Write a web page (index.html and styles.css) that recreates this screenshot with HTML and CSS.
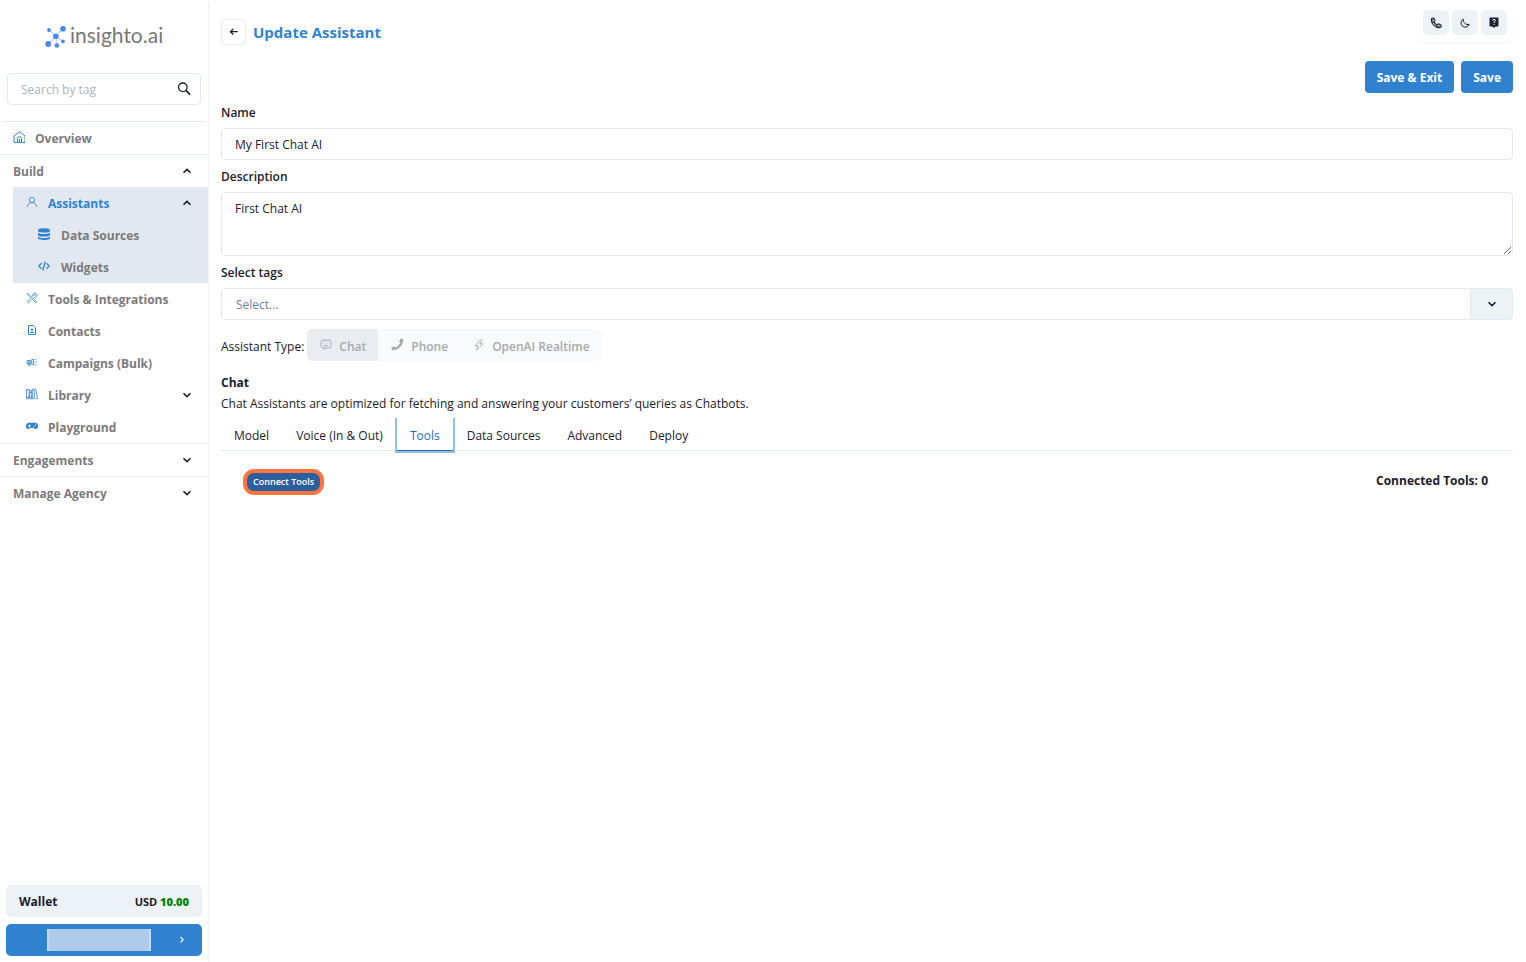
FILE: index.html
```html
<!DOCTYPE html>
<html lang="en">
<head>
<meta charset="utf-8">
<meta name="viewport" content="width=device-width, initial-scale=1">
<title>Update Assistant</title>
<link rel="stylesheet" href="styles.css">
</head>
<body>
<svg class="defs" aria-hidden="true">
  <symbol id="down" viewBox="0 0 12 12"><path d="M2.500 4.200 6 7.600l3.500-3.400" fill="none" stroke="currentColor" stroke-width="1.600"/></symbol>
  <symbol id="up" viewBox="0 0 12 12"><path d="M2.500 7.800 6 4.400l3.500 3.400" fill="none" stroke="currentColor" stroke-width="1.600"/></symbol>
</svg>
<div class="app">
  <aside class="sidebar">
    <a class="logo" href="#">
      <svg width="22" height="24" viewBox="0 0 22 24" aria-hidden="true">
        <g stroke="#b9d2ff" stroke-width="1.200"><path d="M12 11 19 3.500M12 11 5 5M12 11 4.500 19M12 11 19 16.500M12 11 13 20.500"/></g>
        <g fill="#4a86fb"><circle cx="11.800" cy="11.200" r="2.800"/><circle cx="19" cy="3.800" r="2.800"/><circle cx="5" cy="5" r="1.900"/><circle cx="4.200" cy="19" r="2.900"/><circle cx="19" cy="16.300" r="1.900"/><circle cx="12.800" cy="20.500" r="2.300"/></g>
      </svg>
      <span>insighto.ai</span>
    </a>
    <form class="search" role="search">
      <input type="search" placeholder="Search by tag" aria-label="Search by tag">
      <button type="button" aria-label="Search"><svg width="14" height="14" viewBox="0 0 14 14"><circle cx="5.800" cy="5.300" r="4.300" fill="none" stroke="currentColor" stroke-width="1.300"/><path d="m8.900 8.400 4.200 4.200" stroke="currentColor" stroke-width="1.600"/></svg></button>
    </form>
    <nav class="nav">
      <a class="row overview" href="#"><svg class="icon" viewBox="0 0 12 12"><path d="M1 5 6.500.8 12 5v6.400H1zM4.500 11V7.500q0-1.800 2-1.800t2 1.800V11M6.500 8v3" fill="none" stroke="currentColor"/></svg>Overview</a>
      <button class="row section" type="button"><span>Build</span><svg class="chev"><use href="#up"/></svg></button>
      <div class="group">
        <button class="row item active" type="button"><svg class="icon" viewBox="0 0 12 12"><circle cx="6" cy="4" r="2.600" fill="none" stroke="currentColor" stroke-width=".8"/><path d="M1.500 11q0-4.500 4.500-4.500t4.500 4.500" fill="none" stroke="currentColor" stroke-width=".8"/></svg><span>Assistants</span><svg class="chev"><use href="#up"/></svg></button>
        <a class="row sub" href="#"><svg class="icon" viewBox="0 0 12 12"><path d="M0 2C0-.4 12-.4 12 2v1c0 2.200-12 2.200-12 0zM0 4.800c2 1.700 10 1.700 12 0v2.100c0 2.200-12 2.200-12 0zM0 8.700c2 1.700 10 1.700 12 0v1.500c0 2.300-12 2.300-12 0z" fill="currentColor"/></svg>Data Sources</a>
        <a class="row sub" href="#"><svg class="icon" viewBox="0 0 12 12"><path d="M3.500 3.200.8 6l2.700 2.800M8.500 3.200 11.200 6 8.500 8.800M7.200 1.500 4.800 10.500" fill="none" stroke="currentColor" stroke-width="1.300"/></svg>Widgets</a>
      </div>
      <a class="row item" href="#"><svg class="icon" viewBox="0 0 12 12"><path d="m1.500 1 3.600 3.600L4.300 5.400.9 2zM7.400 6.600l3.400 3.200-1 1-3.300-3.300zM8.300.9 6.500 3v1.300L1 9.600l1.300 1.500 5.300-5.500h1.600l2-2-.4-1.200L9.300 4 8 2.900 9.700 1.100z" fill="none" stroke="currentColor" stroke-width=".7"/></svg>Tools &amp; Integrations</a>
      <a class="row item" href="#"><svg class="icon" viewBox="0 0 12 12"><path d="M2.500 1.500h4.800l2.200 2.200v6.800h-7z" fill="none" stroke="currentColor"/><circle cx="6" cy="5.600" r="1.100" fill="currentColor"/><path d="M4 9V8.400q2-1.800 4 0V9z" fill="currentColor"/></svg>Contacts</a>
      <a class="row item" href="#"><svg class="icon" viewBox="0 0 12 12"><path d="M1 4.500h3.200L7.500 3v6L4.200 7.500H1zM2.500 7.500v2h1.700v-2M5 4.300v3.400M9 3.800l1.500-1M9.300 6H11M9 8.200l1.500 1" fill="none" stroke="currentColor" stroke-width=".8"/><path d="M1.500 5h5v2h-5z" fill="currentColor" opacity=".5"/></svg>Campaigns (Bulk)</a>
      <button class="row item" type="button"><svg class="icon" viewBox="0 0 12 12"><path d="M.5 1.500h2.600v9.300H.5zM3.700 2.500h2v8.300h-2zM3.700 4.500h2M3.700 8.800h2M6.300 1.200h2v9.600h-2zM8.700 1.900l1.200-.3 1.700 9-2 .3M.5 9h2.600" fill="none" stroke="currentColor" stroke-width=".8"/></svg><span>Library</span><svg class="chev"><use href="#down"/></svg></button>
      <a class="row item" href="#"><svg class="icon" viewBox="0 0 12 12"><path fill-rule="evenodd" d="M3 2.800h6c2 0 3 1.400 3 3.200S11 9.200 9.500 9c-1 0-1.400-1-2-1h-3c-.6 0-1 1-2 1C1 9.200 0 7.800 0 6s1-3.200 3-3.200zm0 1.700v1H2v1h1v1h1v-1h1v-1H4v-1zm4.500 1.500v1h1V6zM9 4.500v1h1v-1z" fill="currentColor"/></svg>Playground</a>
      <button class="row section lined" type="button"><span>Engagements</span><svg class="chev"><use href="#down"/></svg></button>
      <button class="row section lined" type="button"><span>Manage Agency</span><svg class="chev"><use href="#down"/></svg></button>
    </nav>
    <div class="account">
      <div class="wallet"><span>Wallet</span><span class="amount">USD <b>10.00</b></span></div>
      <button class="profile" type="button" aria-label="Account"><span class="mask"></span><svg width="8" height="8" viewBox="0 0 8 8"><path d="m2.500 1 2.700 2.700-2.700 2.700" fill="none" stroke="currentColor" stroke-width="1.100"/></svg></button>
    </div>
  </aside>

  <main class="main">
    <header class="top">
      <button class="back" type="button" aria-label="Back"><svg width="10" height="10" viewBox="0 0 10 10"><path d="M8.800 4.700H1.500M4.300 1.900 1.500 4.700l2.800 2.800" fill="none" stroke="currentColor" stroke-width="1.300"/></svg></button>
      <h1>Update Assistant</h1>
      <div class="quick">
        <button type="button" aria-label="Call"><svg width="12" height="12" viewBox="0 0 12 12"><path d="M1.400 2.400C1.700.7 3.600.5 4.300 1.900L5 3.300Q5 4.300 4 4.900q1 2 3 3l.9-.8q.6-.4 1.300 0l1.300.7c1.300.8.7 2.700-1 2.900C5.800 11 .8 6.200 1.400 2.400zM1.600 3.300l2-.9M4 4.900 2.200 5.400M7 7.900l-.3 2M8.700 10.500l.5-2.400" fill="none" stroke="currentColor" stroke-width="1.100"/></svg></button>
        <button type="button" aria-label="Dark mode"><svg width="10" height="10" viewBox="0 0 10 10"><path d="M3.400 1.200A4.200 4.200 0 1 0 9.200 6.300 4.500 4.500 0 0 1 3.400 1.200z" fill="none" stroke="currentColor"/></svg></button>
        <button type="button" aria-label="Help"><svg width="10" height="11" viewBox="0 0 10 11"><path d="M1 .5h8l.5.5v8L9 9.500H6.500L5 11 3.500 9.500H1L.5 9V1z" fill="currentColor"/><path d="M3.600 3.800Q3.600 2.300 5 2.300t1.400 1.400Q6.400 4.500 5 5.300v.9M5 7v1" fill="none" stroke="#fff"/></svg></button>
      </div>
    </header>
    <form class="form">
      <div class="actions"><button type="button">Save &amp; Exit</button><button type="button">Save</button></div>
      <label for="name">Name</label>
      <input class="field" id="name" type="text" value="My First Chat AI">
      <label for="desc">Description</label>
      <textarea class="field" id="desc">First Chat AI</textarea>
      <label for="tags">Select tags</label>
      <div class="picker"><select id="tags"><option>Select...</option></select><span class="arrow"><svg class="chev"><use href="#down"/></svg></span></div>
      <div class="type">
        <span>Assistant Type:</span>
        <div class="segments">
          <button class="on" type="button" disabled><svg width="12" height="12" viewBox="0 0 12 12"><path d="M2.500 1.200h7q1.500 0 1.500 1.500v4.500q0 1.500-1.500 1.500H6L4 10.500V8.700H2.500Q1 8.700 1 7.200V2.700q0-1.500 1.500-1.500zM4 3.500v1M8 3.500v1M3.700 6.300q2.300 1.200 4.600 0" fill="none" stroke="currentColor"/></svg>Chat</button>
          <button type="button" disabled><svg width="13" height="13" viewBox="0 0 14 14"><path d="M10.500.5 13 1.200C14 8 7.500 13.800 1 13L.4 10.400l3-1.500 1.500 1.400Q8.500 8.600 10 5.200L8.600 3.600z" fill="currentColor"/></svg>Phone</button>
          <button type="button" disabled><svg width="12" height="12" viewBox="0 0 12 12"><path d="M7.500.8 2 6.500h3L3.500 11.200 10 4.800H6.500l2.500-3.700z" fill="none" stroke="currentColor" stroke-width=".9"/></svg>OpenAI Realtime</button>
        </div>
      </div>
      <h2>Chat</h2>
      <p>Chat Assistants are optimized for fetching and answering your customers’ queries as Chatbots.</p>
    </form>
    <div class="tabs" role="tablist">
      <button role="tab" type="button">Model</button>
      <button role="tab" type="button">Voice (In &amp; Out)</button>
      <button role="tab" type="button" class="selected" aria-selected="true">Tools</button>
      <button role="tab" type="button">Data Sources</button>
      <button role="tab" type="button">Advanced</button>
      <button role="tab" type="button">Deploy</button>
    </div>
    <section class="panel" role="tabpanel">
      <button class="connect" type="button">Connect Tools</button>
      <strong>Connected Tools: 0</strong>
    </section>
  </main>
</div>
</body>
</html>
```
FILE: styles.css
```css
* { box-sizing: border-box; }
body { margin: 0; font: 12px/20px "Open Sans", "Noto Sans", sans-serif; color: #1a202c; background: #fff; }
button, input, textarea, select { font: inherit; color: inherit; margin: 0; }
button { border: 0; padding: 0; background: none; cursor: pointer; }
a { color: inherit; text-decoration: none; }
h1, h2, p { margin: 0; }
svg { flex: none; }
.defs { display: none; }
.app { display: flex; min-height: 100vh; }

.sidebar { width: 208px; flex: none; display: flex; flex-direction: column; box-shadow: 0 1px 3px rgba(0, 0, 0, .14); }
.logo { display: flex; align-items: center; gap: 4px; height: 73px; padding-left: 44px; color: #777; font: 21px/24px Lato, sans-serif; }
.logo span { padding-bottom: 4px; }
.search { display: flex; height: 32px; margin: 0 7px 16px; border: 1px solid #e2e8f0; border-radius: 4px; }
.search input { flex: 1; min-width: 0; border: 0; padding: 2px 0 0 13px; background: none; outline: 0; appearance: none; }
.search input::placeholder { color: #a9b4c4; opacity: 1; }
.search button { width: 32px; display: grid; place-items: center; }
.nav { display: flex; flex-direction: column; color: #7b7b7b; font-weight: 700; }
.nav::before { content: ""; height: 1px; margin: 0 3px; background: #e2e8f0; }
.row { display: flex; align-items: center; width: 100%; height: 32px; padding: 2px 15px 0 13px; text-align: left; font-weight: 700; }
.row span { flex: 1; }
.icon { width: 12px; height: 12px; margin: 0 10px 4px 0; color: #3182ce; }
.chev { width: 12px; height: 12px; color: #1a202c; }
.row .chev { margin-bottom: 2px; }
.overview { height: 33px; border-bottom: 1px solid #e2e8f0; }
.item { padding-left: 26px; }
.group { margin-left: 13px; background: #e2e8f0; }
.group .item { padding-left: 13px; }
.active { color: #3182ce; }
.sub { padding-left: 25px; }
.sub .icon { margin-right: 11px; }
.lined { height: 33px; border-top: 1px solid #e2e8f0; }
.account { margin-top: auto; padding: 6px; display: grid; gap: 7px; }
.wallet { display: flex; align-items: center; justify-content: space-between; height: 32px; padding: 2px 13px 0; border-radius: 5px; background: #edf2f7; font-weight: 700; }
.amount { font-size: 11px; }
.amount b { color: green; }
.profile { display: flex; align-items: center; justify-content: space-between; height: 32px; padding: 0 16px 0 41px; border-radius: 5px; background: #3182ce; color: #fff; }
.mask { width: 104px; height: 22px; background: #aecce9; border: solid #c3daf0; border-width: 0 2px; }

.main { flex: 1; min-width: 0; padding: 10px 13px; }
.top { display: flex; align-items: flex-start; height: 45px; }
.back { display: grid; place-items: center; width: 25px; height: 26px; margin-top: 9px; border: 1px solid #e2e8f0; border-radius: 5px; }
h1 { margin: 10px 0 0 7px; color: #3182ce; font-size: 15px; line-height: 24px; font-weight: 700; }
.quick { display: flex; gap: 3px; margin-left: auto; padding: 0 6px 7px; border-radius: 6px; box-shadow: 0 1px 2px rgba(0, 0, 0, .06); }
.quick button { display: grid; place-items: center; width: 26px; height: 25px; border-radius: 5px; background: #edf2f7; }
.form { display: flex; flex-direction: column; padding-top: 6px; }
.actions { display: flex; justify-content: flex-end; gap: 7px; margin-bottom: 10px; }
.actions button { height: 32px; padding: 2px 12px 0; border-radius: 4px; background: #3182ce; color: #fff; font-weight: 700; }
label { font-weight: 600; margin-bottom: 5px; }
.field { display: block; width: 100%; height: 32px; margin-bottom: 7px; padding: 6px 13px 5px; border: 1px solid #e2e8f0; border-radius: 4px; background: #fff; }
textarea.field { height: 64px; resize: vertical; }
.picker { display: flex; height: 32px; border: 1px solid #e2e8f0; border-radius: 4px; overflow: hidden; }
.picker select { flex: 1; min-width: 0; appearance: none; border: 0; padding: 2px 14px 0; background: #fff; color: #718096; }
.arrow { display: grid; place-items: center; width: 42px; border-left: 1px solid #e2e8f0; background: #edf2f7; }
.type { display: flex; align-items: center; gap: 3px; margin: 9px 0 12px; }
.type > span { padding-top: 4px; }
.segments { display: flex; border-radius: 5px; overflow: hidden; background: #f9fafc; color: #a7a9ad; }
.segments button { display: flex; align-items: center; gap: 7px; height: 32px; padding: 4px 12px 0 13px; font-weight: 600; cursor: default; }
.segments svg { margin-bottom: 5px; }
.segments .on { background: #e9edf2; }
h2 { font-size: 12px; line-height: 20px; font-weight: 700; }
p { margin: 1px 0 4px; }
.tabs { display: flex; gap: 1px; border-bottom: 1px solid #e2e8f0; }
.tabs button { height: 33px; padding: 4px 13px 0; border-bottom: 1px solid transparent; margin-bottom: -1px; }
.tabs .selected { color: #2b6cb0; border-bottom-color: #2b6cb0; box-shadow: 0 0 0 2px #90c0ea; clip-path: inset(0 -3px -3px); }
.panel { display: flex; align-items: flex-start; justify-content: space-between; padding: 18px 25px 18px 22px; }
.connect { height: 26px; padding: 0 6px; border: 4px solid #ff7440; border-radius: 11px; background: #2c5f9e; color: #fff; font-size: 9px; line-height: 16px; font-weight: 600; }
.panel strong { padding-top: 2px; font-weight: 700; }
```
